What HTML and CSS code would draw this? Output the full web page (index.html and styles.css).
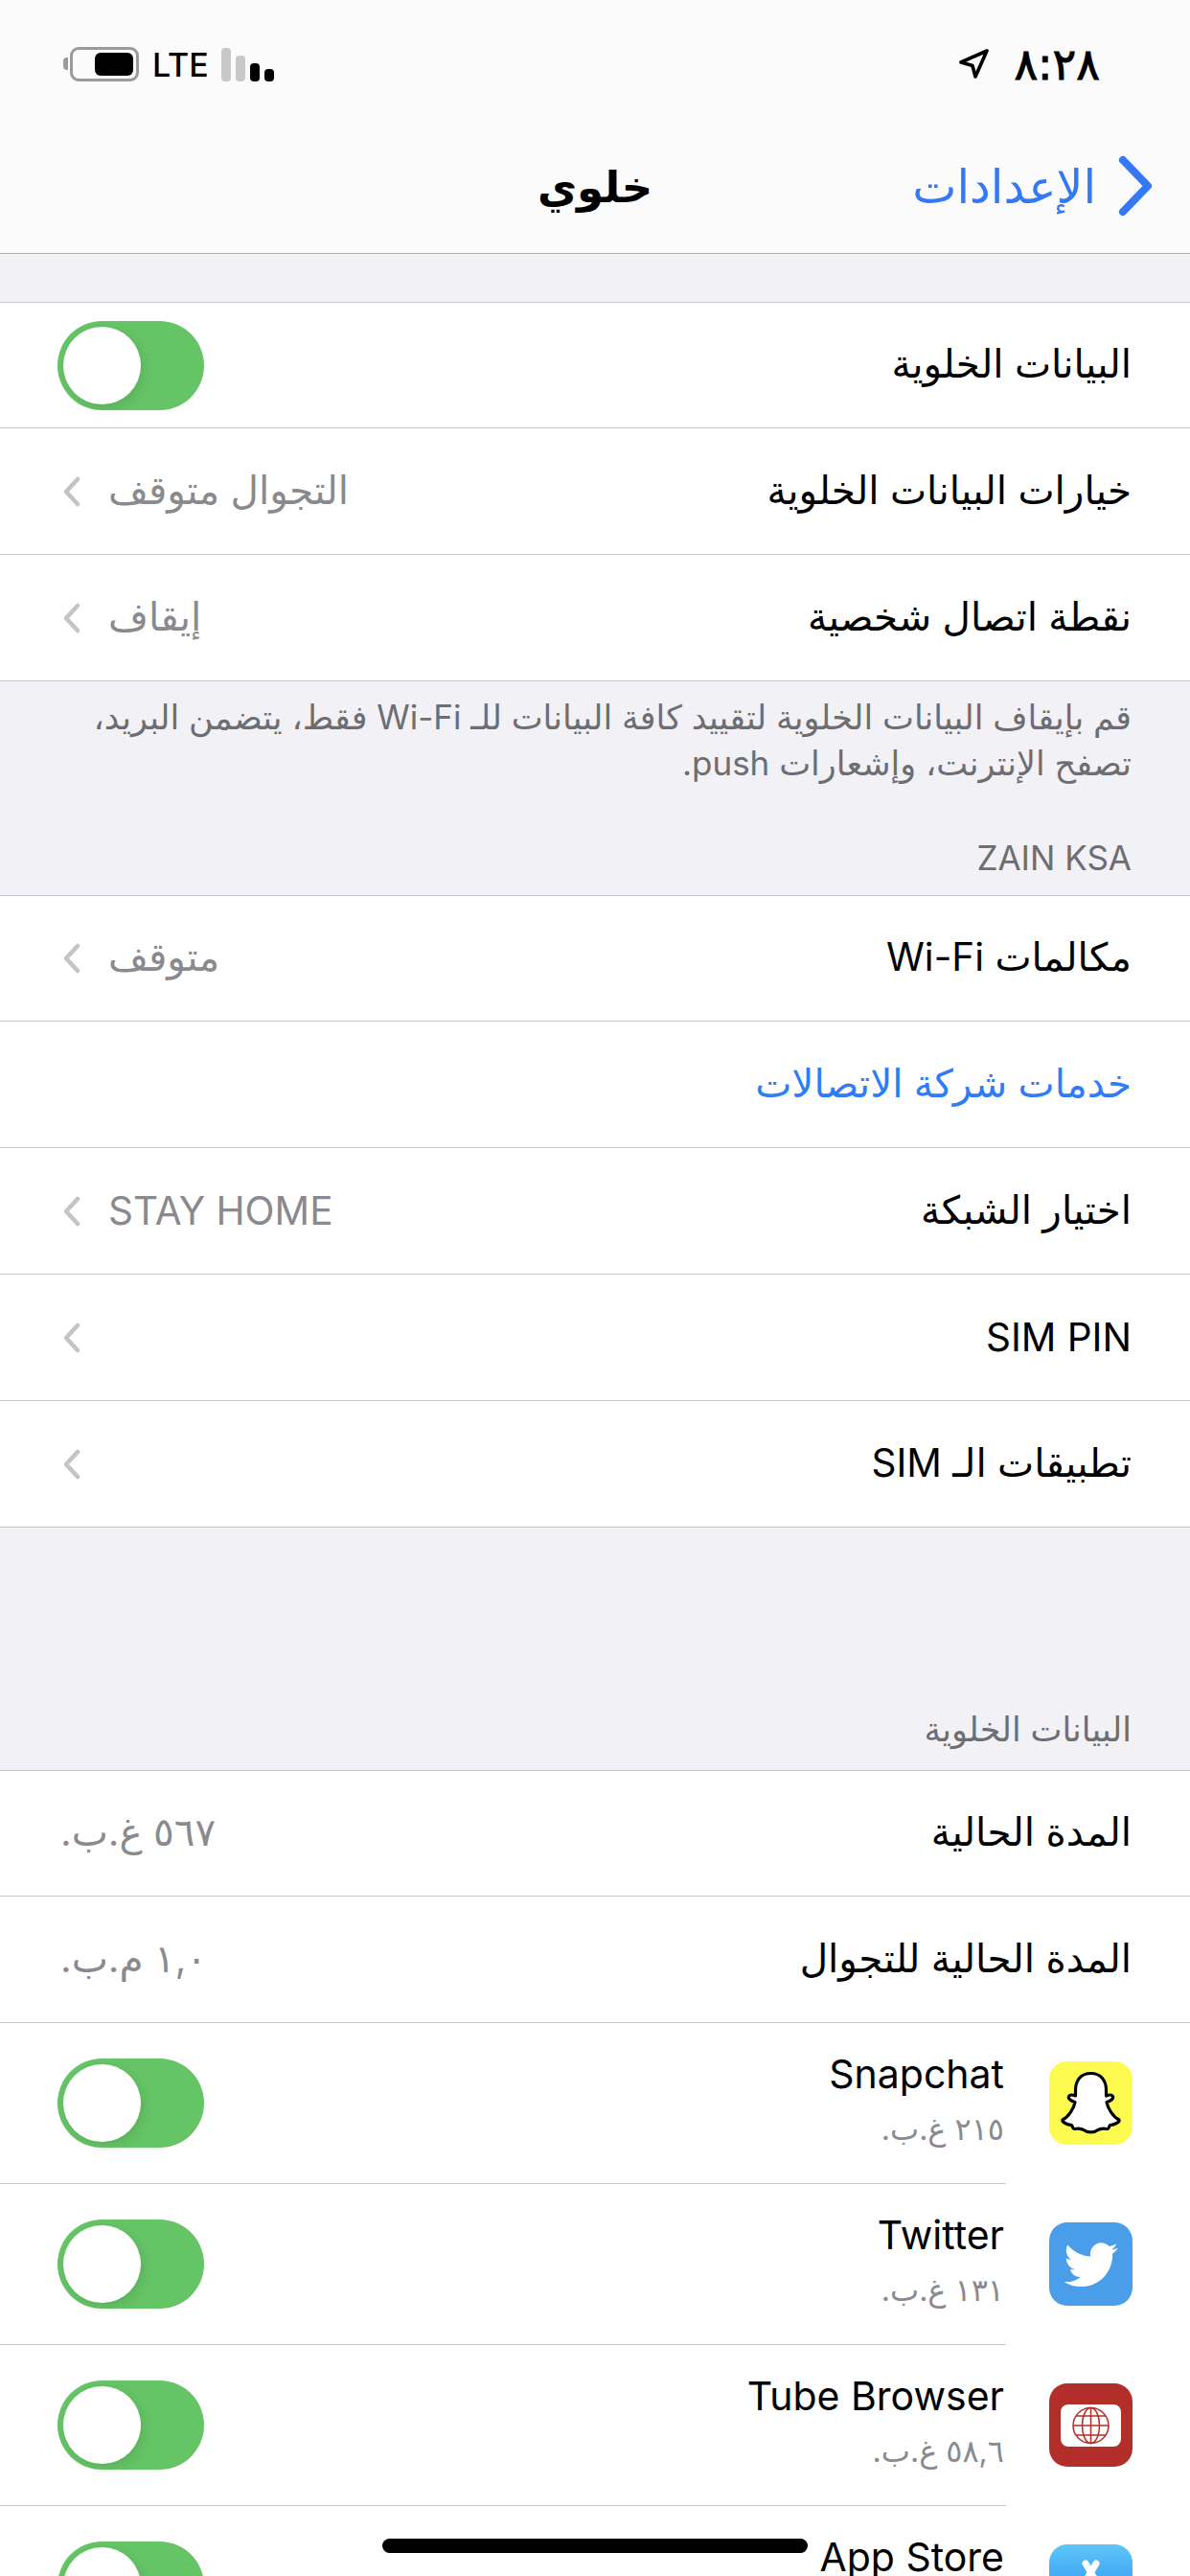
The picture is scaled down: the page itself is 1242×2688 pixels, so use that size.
FILE: index.html
```html
<!DOCTYPE html>
<html lang="ar" dir="rtl">
<head>
  <meta charset="UTF-8" />
  <meta name="viewport" content="width=device-width, initial-scale=1.0"/>
  <title>خلوي</title>
  <link rel="stylesheet" href="styles.css">
</head>
<body>
  <svg class="defs" width="0" height="0">
    <symbol id="chev" viewBox="0 0 22 36">
      <path d="M18 5 L6 18 L18 31" fill="none" stroke="#c4c4c7" stroke-width="4.500" stroke-linecap="round" stroke-linejoin="round"/>
    </symbol>
  </svg>

  <header class="top">
    <div class="status">
      <div class="status-left">
        <span class="batt-nub"></span>
        <span class="batt"><span class="batt-fill"></span></span>
        <span class="lte">LTE</span>
        <span class="bars">
          <i class="bar bar-1"></i>
          <i class="bar bar-2"></i>
          <i class="bar bar-3"></i>
          <i class="bar bar-4"></i>
        </span>
      </div>
      <div class="status-right">
        <svg class="loc" viewBox="0 0 32 32"><path d="M30 2 L3 14 L15 17.500 L18 29 Z" fill="none" stroke="#000" stroke-width="3.600" stroke-linejoin="round"/></svg>
        <span class="time">٨:٢٨</span>
      </div>
    </div>
    <nav class="nav">
      <div class="back">
        <svg class="back-chev" viewBox="0 0 38 64"><path d="M6 5 L32 32 L6 59" fill="none" stroke="#3478f6" stroke-width="8" stroke-linecap="round" stroke-linejoin="round"/></svg>
        <span>الإعدادات</span>
      </div>
      <h1>خلوي</h1>
      <div></div>
    </nav>
  </header>

  <section class="group first">
    <div class="row">
      <span class="label">البيانات الخلوية</span>
      <span class="toggle"><span class="knob"></span></span>
    </div>
    <div class="row">
      <span class="label">خيارات البيانات الخلوية</span>
      <span class="value">التجوال متوقف</span>
      <svg class="chev"><use href="#chev"/></svg>
    </div>
    <div class="row">
      <span class="label">نقطة اتصال شخصية</span>
      <span class="value">إيقاف</span>
      <svg class="chev"><use href="#chev"/></svg>
    </div>
  </section>

  <div class="note">
    <p>قم بإيقاف البيانات الخلوية لتقييد كافة البيانات للـ Wi-Fi فقط، يتضمن البريد،<br>تصفح الإنترنت، وإشعارات push.</p>
    <h2 class="carrier">ZAIN KSA</h2>
  </div>

  <section class="group">
    <div class="row">
      <span class="label">مكالمات Wi-Fi</span>
      <span class="value">متوقف</span>
      <svg class="chev"><use href="#chev"/></svg>
    </div>
    <div class="row">
      <span class="label link">خدمات شركة الاتصالات</span>
    </div>
    <div class="row">
      <span class="label">اختيار الشبكة</span>
      <span class="value latin">STAY HOME</span>
      <svg class="chev"><use href="#chev"/></svg>
    </div>
    <div class="row">
      <span class="label latin">SIM PIN</span>
      <svg class="chev"><use href="#chev"/></svg>
    </div>
    <div class="row">
      <span class="label">تطبيقات الـ SIM</span>
      <svg class="chev"><use href="#chev"/></svg>
    </div>
  </section>

  <div class="gap">
    <h2>البيانات الخلوية</h2>
  </div>

  <section class="group">
    <div class="row">
      <span class="label">المدة الحالية</span>
      <span class="value flush">٥٦٧ غ.ب.</span>
    </div>
    <div class="row">
      <span class="label">المدة الحالية للتجوال</span>
      <span class="value flush">١,٠ م.ب.</span>
    </div>

    <div class="app">
      <svg class="icon" viewBox="0 0 87 87">
        <rect width="87" height="87" rx="19" fill="#fdfa50"/>
        <path d="M43.500 12.500 C33 12.500 27.500 20 27.500 30 L27.500 36 C25 35 22 34 20.500 36.500 C19.500 39 23 41.500 27 42.500 C26 49 20 58 14 61 C13 63.500 19 66 23.500 66.500 C24.500 69 25 70.500 26.500 70.500 C31 69.500 34 70 37 72 C40 74.500 47 74.500 50 72 C53 70 56 69.500 60.500 70.500 C62 70.500 62.500 69 63.500 66.500 C68 66 74 63.500 73 61 C67 58 61 49 60 42.500 C64 41.500 67.500 39 66.500 36.500 C65 34 62 35 59.500 36 L59.500 30 C59.500 20 54 12.500 43.500 12.500 Z" fill="#fff" stroke="#000" stroke-width="3.200" stroke-linejoin="round"/>
      </svg>
      <div class="app-body">
        <div class="app-text">
          <span class="app-name">Snapchat</span>
          <span class="app-size">٢١٥ غ.ب.</span>
        </div>
        <span class="toggle"><span class="knob"></span></span>
      </div>
    </div>

    <div class="app">
      <svg class="icon" viewBox="0 0 87 87">
        <rect width="87" height="87" rx="19" fill="#4a9de8"/>
        <g transform="translate(15.500 16) scale(2.350)">
          <path d="M23.953 4.570a10 10 0 01-2.825.775 4.958 4.958 0 002.163-2.723c-.951.555-2.005.959-3.127 1.184a4.920 4.920 0 00-8.384 4.482C7.690 8.095 4.067 6.130 1.640 3.162a4.822 4.822 0 00-.666 2.475c0 1.710.870 3.213 2.188 4.096a4.904 4.904 0 01-2.228-.616v.060a4.923 4.923 0 003.946 4.827 4.996 4.996 0 01-2.212.085 4.936 4.936 0 004.604 3.417 9.867 9.867 0 01-6.102 2.105c-.390 0-.779-.023-1.170-.067a13.995 13.995 0 007.557 2.209c9.053 0 13.998-7.496 13.998-13.985 0-.210 0-.420-.015-.630A9.935 9.935 0 0024 4.590z" fill="#fff"/>
        </g>
      </svg>
      <div class="app-body">
        <div class="app-text">
          <span class="app-name">Twitter</span>
          <span class="app-size">١٣١ غ.ب.</span>
        </div>
        <span class="toggle"><span class="knob"></span></span>
      </div>
    </div>

    <div class="app">
      <svg class="icon" viewBox="0 0 87 87">
        <rect width="87" height="87" rx="19" fill="#b22f29"/>
        <rect x="12" y="22" width="63" height="44" rx="8" fill="#fff"/>
        <g fill="none" stroke="#b22f29" stroke-width="1.500">
          <circle cx="43.500" cy="44" r="18.500"/>
          <ellipse cx="43.500" cy="44" rx="9" ry="18.500"/>
          <path d="M43.500 25.500 V62.500 M25 44 H62 M28 34 H59 M28 54 H59"/>
        </g>
      </svg>
      <div class="app-body">
        <div class="app-text">
          <span class="app-name">Tube Browser</span>
          <span class="app-size">٥٨,٦ غ.ب.</span>
        </div>
        <span class="toggle"><span class="knob"></span></span>
      </div>
    </div>

    <div class="app">
      <svg class="icon" viewBox="0 0 87 87">
        <defs>
          <linearGradient id="store" x1="0" y1="0" x2="0" y2="1">
            <stop offset="0" stop-color="#5ec5f8"/>
            <stop offset="1" stop-color="#1b7ff0"/>
          </linearGradient>
        </defs>
        <rect width="87" height="87" rx="19" fill="url(#store)"/>
        <path d="M38 20 L57 52 M49 20 L30 52 M18 56 H70" fill="none" stroke="#fff" stroke-width="7" stroke-linecap="round"/>
      </svg>
      <div class="app-body">
        <div class="app-text">
          <span class="app-name">App Store</span>
        </div>
        <span class="toggle"><span class="knob"></span></span>
      </div>
    </div>
  </section>

  <div class="home-bar"></div>
</body>
</html>
```

FILE: styles.css
```css
* {
  box-sizing: border-box;
}

html {
  height: 2688px;
  overflow: hidden;
}

body {
  margin: 0;
  height: 2688px;
  overflow: hidden;
  background: #f1f1f6;
  color: #000;
  font-family: 'Inter', 'DejaVu Sans', sans-serif;
  position: relative;
}

.defs {
  display: block;
  height: 0;
}

/* top bar */

.top {
  height: 265px;
  background: #fbfbfc;
  border-bottom: 1px solid #b2b2b2;
}

.status {
  height: 132px;
  direction: ltr;
  display: flex;
  justify-content: space-between;
  align-items: flex-start;
  padding: 49px 94px 0 66px;
}

.status-left {
  display: flex;
  align-items: flex-start;
}

.batt-nub {
  width: 5px;
  height: 13px;
  margin: 11px 2px 0 0;
  background: #9a9a9a;
  border-radius: 4px 0 0 4px;
}

.batt {
  width: 72px;
  height: 36px;
  border: 3px solid #9a9a9a;
  border-radius: 9px;
  padding: 3px 3px;
  display: flex;
  justify-content: flex-end;
}

.batt-fill {
  width: 40px;
  height: 24px;
  background: #000;
  border-radius: 6px;
}

.lte {
  margin: 0 0 0 14px;
  font-size: 34px;
  line-height: 38px;
  font-weight: 500;
}

.bars {
  display: flex;
  align-items: flex-end;
  gap: 5px;
  height: 35px;
  margin: 1px 0 0 13px;
}

.bar {
  display: block;
  width: 10px;
  border-radius: 4px;
  background: #000;
}

.bar-1 {
  height: 35px;
  background: #c8c8c8;
}

.bar-2 {
  height: 27px;
  background: #c8c8c8;
}

.bar-3 {
  height: 19px;
}

.bar-4 {
  height: 13px;
}

.status-right {
  display: flex;
  align-items: center;
  gap: 26px;
}

.loc {
  width: 32px;
  height: 32px;
}

.time {
  font-family: 'DejaVu Sans', sans-serif;
  font-size: 46px;
  line-height: 36px;
  -webkit-text-stroke: 1px #000;
}

.nav {
  height: 132px;
  display: grid;
  grid-template-columns: 1fr auto 1fr;
  align-items: center;
  padding: 0 38px 8px;
}

.nav h1 {
  margin: 0;
  font-size: 45px;
  font-weight: 700;
}

.back {
  display: flex;
  align-items: center;
  gap: 22px;
  color: #3478f6;
  font-size: 49px;
}

.back-chev {
  width: 38px;
  height: 64px;
}

/* list groups */

.group {
  background: #fff;
  border-top: 1px solid #c6c6c8;
}

.first {
  margin-top: 50px;
}

.row {
  height: 132px;
  display: flex;
  align-items: center;
  padding: 0 61px 0 60px;
  border-bottom: 1px solid #c6c6c8;
  font-size: 40.500px;
}

.row:first-child {
  height: 131px;
}

.label {
  margin-left: auto;
  margin-bottom: 3px;
}

.link {
  color: #2f7cf6;
}

.value {
  color: #8a8a8e;
  margin-left: 28px;
  margin-bottom: 3px;
}

.row .latin {
  margin-bottom: 0;
}

.flush {
  margin-left: 3px;
}

.chev {
  width: 22px;
  height: 36px;
  margin-left: 3px;
}

.toggle {
  width: 153px;
  height: 93px;
  direction: ltr;
  display: flex;
  align-items: center;
  padding-left: 6px;
  background: #65c466;
  border-radius: 47px;
}

.knob {
  width: 81px;
  height: 81px;
  background: #fff;
  border-radius: 50%;
  box-shadow: 3px 4px 12px rgba(0, 0, 0, 0.1);
}

/* grey areas between groups */

.note {
  height: 223px;
  padding: 13px 61px 0;
  color: #6d6d72;
  font-size: 35px;
}

.note p {
  margin: 0;
  line-height: 48px;
  white-space: nowrap;
}

.carrier {
  margin: 53px 0 0;
  font-size: 35px;
  font-weight: 400;
  line-height: 44px;
}

.gap {
  height: 253px;
  padding: 188px 61px 0;
  color: #6d6d72;
}

.gap h2 {
  margin: 0;
  font-size: 35px;
  font-weight: 400;
  line-height: 44px;
}

/* per app rows */

.app {
  height: 168px;
  display: flex;
  padding-right: 60px;
}

.icon {
  width: 87px;
  height: 87px;
  flex-shrink: 0;
  margin: 40px 0 0 45px;
}

.app-body {
  flex: 1;
  display: flex;
  align-items: center;
  justify-content: space-between;
  padding: 0 2px 0 60px;
  border-bottom: 1px solid #c6c6c8;
}

.app-text {
  display: flex;
  flex-direction: column;
  gap: 13px;
  min-height: 103px;
  margin-bottom: 9px;
}

.app-name {
  font-size: 41px;
  line-height: 50px;
}

.app-size {
  font-size: 32px;
  line-height: 40px;
  color: #8a8a8e;
}

.home-bar {
  position: absolute;
  left: 399px;
  top: 2649px;
  width: 444px;
  height: 15px;
  background: #000;
  border-radius: 8px;
}
```
